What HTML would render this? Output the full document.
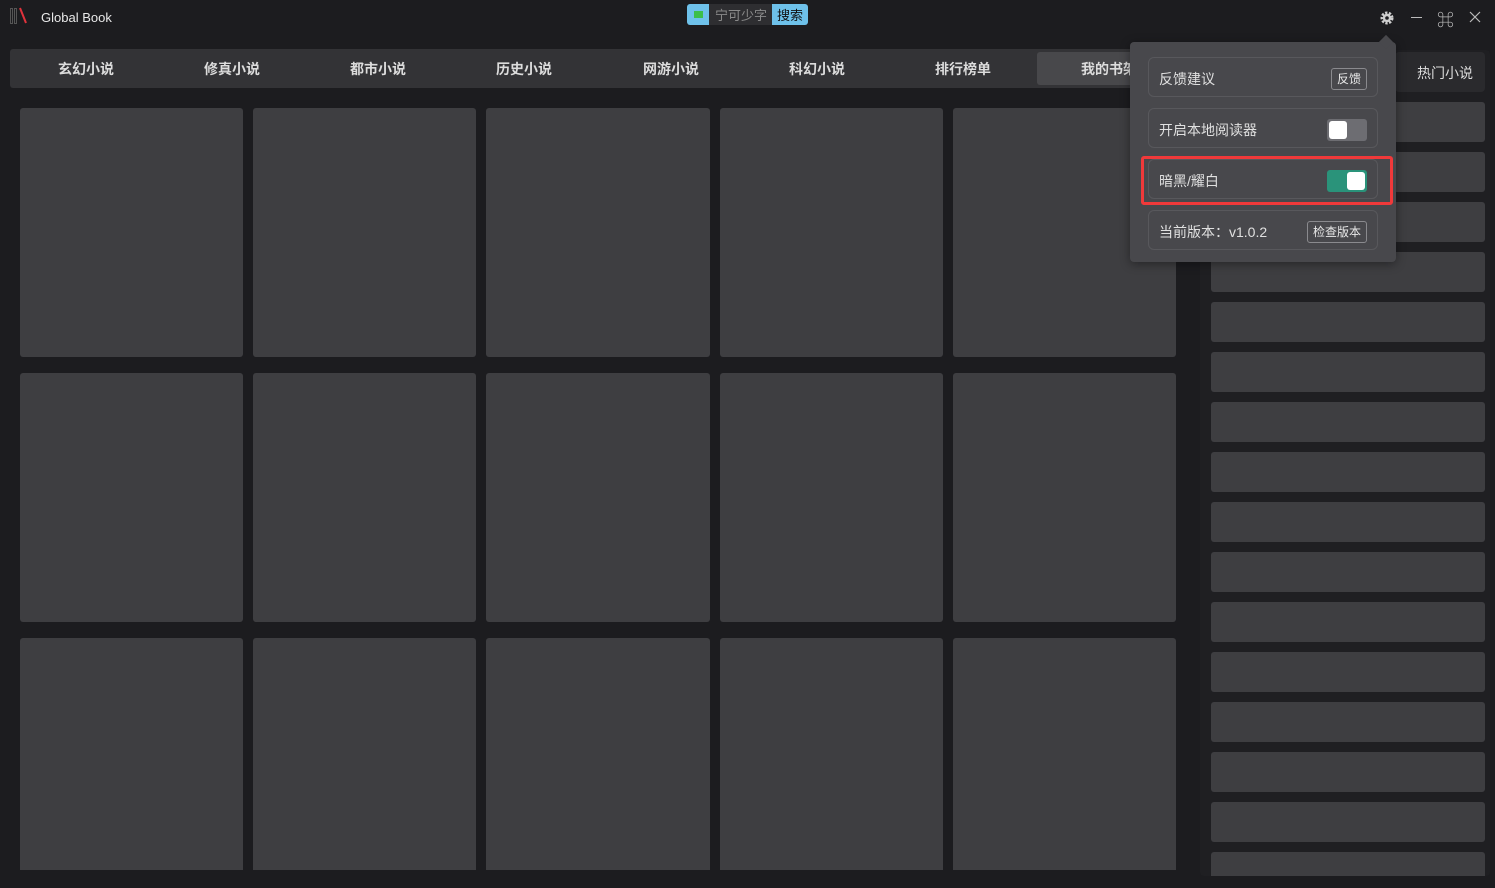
<!DOCTYPE html>
<html><head><meta charset="utf-8"><style>
*{margin:0;padding:0;box-sizing:border-box}
body{width:1495px;height:888px;background:#1c1c1f;font-family:"Liberation Sans","Noto Sans CJK SC",sans-serif;position:relative;overflow:hidden;color:#e6e6e6}
.a{position:absolute}
.card{position:absolute;background:#3e3e41;border-radius:3px}
.tab{position:absolute;top:50px;height:39px;width:146px;text-align:center;line-height:39px;font-size:14px;font-weight:bold;color:#dcdcdc}
.item{position:absolute;left:1148px;width:230px;height:40px;border:1px solid #58585c;border-radius:6px;font-size:14px;color:#e0e0e0;line-height:42px;padding-left:10px}
.btn{position:absolute;right:10px;top:10px;height:22px;border:1px solid #8a8a8e;border-radius:3px;font-size:12px;line-height:20px;padding:0 5px;color:#e8e8e8}
.sw{position:absolute;right:10px;top:10px;width:40px;height:22px;border-radius:3px}
.knob{position:absolute;top:2px;width:18px;height:18px;background:#fff;border-radius:3px}
</style></head><body>
<div class="a" style="left:10px;top:8px;width:3px;height:16px;border:1px solid #555"></div>
<div class="a" style="left:14px;top:8px;width:3px;height:16px;border:1px solid #555"></div>
<svg class="a" style="left:18px;top:7px" width="10" height="18"><line x1="2" y1="1" x2="8" y2="16" stroke="#e0323c" stroke-width="2"/></svg>
<div class="a" style="left:41px;top:10px;font-size:13px;color:#e8e8e8">Global Book</div>
<div class="a" style="left:687px;top:4px;width:22px;height:21px;background:#6ec1ea;border-radius:3px 0 0 3px"></div>
<div class="a" style="left:694px;top:11px;width:9px;height:7px;background:#3cbf4a"></div>
<div class="a" style="left:709px;top:4px;width:63px;height:21px;background:#2e2e31;color:#8a8a8a;font-size:13px;line-height:23px;padding-left:6px">宁可少字</div>
<div class="a" style="left:772px;top:4px;width:36px;height:21px;background:#6ec1ea;border-radius:0 3px 3px 0;color:#111;font-size:13px;line-height:23px;text-align:center">搜索</div>
<svg class="a" style="left:1379px;top:10px" width="16" height="16" viewBox="0 0 16 16"><circle cx="8" cy="8" r="5" fill="none" stroke="#cfcfcf" stroke-width="3" stroke-dasharray="2.2 1.4"/><circle cx="8" cy="8" r="4.2" fill="#cfcfcf"/><circle cx="8" cy="8" r="1.8" fill="#1c1c1f"/></svg>
<div class="a" style="left:1411px;top:17px;width:11px;height:1px;background:#bbb"></div>
<div class="a" style="left:1437px;top:6px;font-size:17px;color:#bbb">⌘</div>
<svg class="a" style="left:1469px;top:11px" width="12" height="12"><path d="M1 1L11 11M11 1L1 11" stroke="#bbb" stroke-width="1.2"/></svg>
<div class="a" style="left:10px;top:49px;width:1170px;height:39px;background:#333336;border-radius:3px"></div>
<div class="a" style="left:1037px;top:52px;width:140px;height:33px;background:#48484b;border-radius:3px"></div>
<div class="tab" style="left:13px">玄幻小说</div><div class="tab" style="left:159px">修真小说</div><div class="tab" style="left:305px">都市小说</div><div class="tab" style="left:451px">历史小说</div><div class="tab" style="left:598px">网游小说</div><div class="tab" style="left:744px">科幻小说</div><div class="tab" style="left:890px">排行榜单</div><div class="tab" style="left:1036px">我的书架</div>
<div class="a" style="left:1200px;top:50px;width:290px;height:826px;background:#1f1f22;border-radius:4px"></div>
<div class="a" style="left:1395px;top:52px;width:90px;height:40px;background:#2a2a2d;border-radius:4px;font-size:14px;line-height:42px;padding-left:22px;color:#dcdcdc">热门小说</div>
<div class="card" style="left:20px;top:108px;width:223px;height:249px"></div><div class="card" style="left:253px;top:108px;width:223px;height:249px"></div><div class="card" style="left:486px;top:108px;width:224px;height:249px"></div><div class="card" style="left:720px;top:108px;width:223px;height:249px"></div><div class="card" style="left:953px;top:108px;width:223px;height:249px"></div>
<div class="card" style="left:20px;top:373px;width:223px;height:249px"></div><div class="card" style="left:253px;top:373px;width:223px;height:249px"></div><div class="card" style="left:486px;top:373px;width:224px;height:249px"></div><div class="card" style="left:720px;top:373px;width:223px;height:249px"></div><div class="card" style="left:953px;top:373px;width:223px;height:249px"></div>
<div class="card" style="left:20px;top:638px;width:223px;height:232px;border-radius:3px 3px 0 0"></div><div class="card" style="left:253px;top:638px;width:223px;height:232px;border-radius:3px 3px 0 0"></div><div class="card" style="left:486px;top:638px;width:224px;height:232px;border-radius:3px 3px 0 0"></div><div class="card" style="left:720px;top:638px;width:223px;height:232px;border-radius:3px 3px 0 0"></div><div class="card" style="left:953px;top:638px;width:223px;height:232px;border-radius:3px 3px 0 0"></div>
<div class="card" style="left:1211px;top:102px;width:274px;height:40px"></div><div class="card" style="left:1211px;top:152px;width:274px;height:40px"></div><div class="card" style="left:1211px;top:202px;width:274px;height:40px"></div><div class="card" style="left:1211px;top:252px;width:274px;height:40px"></div><div class="card" style="left:1211px;top:302px;width:274px;height:40px"></div><div class="card" style="left:1211px;top:352px;width:274px;height:40px"></div><div class="card" style="left:1211px;top:402px;width:274px;height:40px"></div><div class="card" style="left:1211px;top:452px;width:274px;height:40px"></div><div class="card" style="left:1211px;top:502px;width:274px;height:40px"></div><div class="card" style="left:1211px;top:552px;width:274px;height:40px"></div><div class="card" style="left:1211px;top:602px;width:274px;height:40px"></div><div class="card" style="left:1211px;top:652px;width:274px;height:40px"></div><div class="card" style="left:1211px;top:702px;width:274px;height:40px"></div><div class="card" style="left:1211px;top:752px;width:274px;height:40px"></div><div class="card" style="left:1211px;top:802px;width:274px;height:40px"></div><div class="card" style="left:1211px;top:852px;width:274px;height:24px;border-radius:3px 3px 0 0"></div>
<div class="a" style="left:1130px;top:42px;width:266px;height:220px;background:#48484c;border-radius:4px;box-shadow:0 2px 10px rgba(0,0,0,.4)"></div>
<div class="a" style="left:1381px;top:37px;width:10px;height:10px;background:#48484c;transform:rotate(45deg)"></div>
<div class="item" style="top:57px">反馈建议<div class="btn">反馈</div></div>
<div class="item" style="top:108px">开启本地阅读器<div class="sw" style="background:#6d6d72"><div class="knob" style="left:2px"></div></div></div>
<div class="item" style="top:159px">暗黑/耀白<div class="sw" style="background:#2a937a"><div class="knob" style="right:2px"></div></div></div>
<div class="item" style="top:210px">当前版本：v1.0.2<div class="btn" style="line-height:21px">检查版本</div></div>
<div class="a" style="left:1141px;top:156px;width:252px;height:49px;border:3px solid #f0393a;border-radius:3px"></div>
</body></html>
